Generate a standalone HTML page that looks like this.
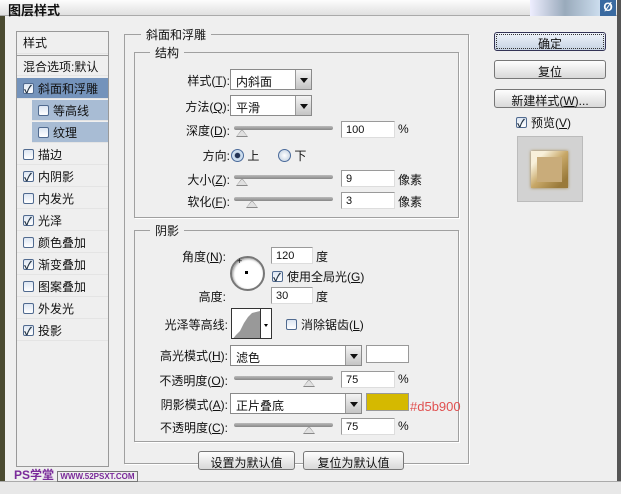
<!DOCTYPE html>
<html><head><meta charset="utf-8"><style>
*{box-sizing:border-box;margin:0;padding:0}
body{width:621px;height:494px;overflow:hidden;background:#efefef;font-family:"Liberation Sans","Noto Sans CJK SC",sans-serif;font-size:12px;color:#111;position:relative}
.a{position:absolute;white-space:nowrap}
.r{text-align:right}
.box{position:absolute;border:1px solid #a0a0a0;box-shadow:1px 1px 0 #fff}
.leg{position:absolute;background:#efefef;padding:0 5px;font-size:12px}
.inp{position:absolute;background:#fff;border:1px solid #9a9a9a;border-right-color:#ddd;border-bottom-color:#ddd;padding:2px 0 0 4px;font-size:11px}
.dd{position:absolute;background:#fff;border:1px solid #8a8a8a;padding:3px 0 0 5px}
.dd i{position:absolute;right:0;top:0;bottom:0;width:16px;background:linear-gradient(#f4f4f4,#c4c4c4);border-left:1px solid #999}
.dd i:after{content:"";position:absolute;left:4px;top:8px;border:4px solid transparent;border-top:5px solid #111}
.sl{position:absolute;height:4px;background:linear-gradient(#bbb,#888);border-radius:2px}
.th{position:absolute;width:0;height:0;border-left:6px solid transparent;border-right:6px solid transparent;border-bottom:8px solid #888}
.th:after{content:"";position:absolute;left:-5px;top:1px;border-left:5px solid transparent;border-right:5px solid transparent;border-bottom:6px solid #e0e0e0}
.cb{display:inline-block;width:11px;height:11px;border:1px solid #506a8f;background:linear-gradient(#dde6f2,#fff);vertical-align:-1px;margin-right:4px;position:relative;border-radius:2px}
.cb.on:after{content:"✓";position:absolute;left:0;top:-3px;font-size:11px;color:#234;font-weight:bold}
.li{position:absolute;left:17px;width:91px;height:21px;padding:2px 0 0 6px;border-bottom:1px solid #e4e4e4}
.btn{position:absolute;border:1px solid #777;border-radius:3px;background:linear-gradient(#fdfdfd,#d9d9d9);text-align:center;padding-top:2px}
</style></head><body>
<div class="a" style="left:0;top:0;width:621px;height:16px;background:linear-gradient(#fdfdfd,#e0e0e0);border-bottom:1px solid #aaa"></div>
<div class="a" style="left:8px;top:0;font-weight:bold;font-size:13px">图层样式</div>
<div class="a" style="left:530px;top:0;width:70px;height:16px;background:linear-gradient(90deg,#eef,#9ab 50%,#cde)"></div>
<div class="a" style="left:600px;top:0;width:16px;height:16px;background:#3a6aa0;color:#fff;font-weight:bold;text-align:center">Ø</div>
<div class="a" style="left:0;top:16px;width:5px;height:478px;background:#4a4a30"></div>
<div class="a" style="left:617px;top:0;width:4px;height:494px;background:#555"></div>
<div class="a" style="left:0;top:481px;width:621px;height:13px;background:#e8e8e8;border-top:1px solid #aaa"></div>

<!-- left list -->
<div class="a" style="left:16px;top:31px;width:93px;height:436px;border:1px solid #999;background:#efefef"></div>
<div class="li" style="top:32px;height:22px">样式</div>
<div class="li" style="top:55px;border-top:1px solid #999">混合选项:默认</div>
<div class="li" style="top:78px;background:#7493bb"><span class="cb on"></span>斜面和浮雕</div>
<div class="li" style="top:100px;left:32px;width:76px;background:#a8bcd4"><span class="cb"></span>等高线</div>
<div class="li" style="top:122px;left:32px;width:76px;background:#a8bcd4"><span class="cb"></span>纹理</div>
<div class="li" style="top:144px"><span class="cb"></span>描边</div>
<div class="li" style="top:166px"><span class="cb on"></span>内阴影</div>
<div class="li" style="top:188px"><span class="cb"></span>内发光</div>
<div class="li" style="top:210px"><span class="cb on"></span>光泽</div>
<div class="li" style="top:232px"><span class="cb"></span>颜色叠加</div>
<div class="li" style="top:254px"><span class="cb on"></span>渐变叠加</div>
<div class="li" style="top:276px"><span class="cb"></span>图案叠加</div>
<div class="li" style="top:298px"><span class="cb"></span>外发光</div>
<div class="li" style="top:320px"><span class="cb on"></span>投影</div>
<div class="a" style="left:14px;top:466px;color:#7a2a9a;font-weight:bold;font-size:12px">PS学堂 <span style="font-size:8px;border:1px solid #777;background:#eee;padding:0 2px">WWW.52PSXT.COM</span></div>

<!-- group boxes -->
<div class="box" style="left:124px;top:34px;width:345px;height:430px"></div>
<div class="leg" style="left:141px;top:26px">斜面和浮雕</div>
<div class="box" style="left:134px;top:52px;width:325px;height:166px"></div>
<div class="leg" style="left:150px;top:44px">结构</div>
<div class="box" style="left:134px;top:230px;width:325px;height:212px"></div>
<div class="leg" style="left:150px;top:222px">阴影</div>

<div class="a r" style="left:150px;width:80px;top:72px">样式(<u>T</u>):</div>
<div class="dd" style="left:230px;top:69px;width:82px;height:21px">内斜面<i></i></div>
<div class="a r" style="left:150px;width:80px;top:98px">方法(<u>Q</u>):</div>
<div class="dd" style="left:230px;top:95px;width:82px;height:21px">平滑<i></i></div>
<div class="a r" style="left:150px;width:80px;top:122px">深度(<u>D</u>):</div>
<div class="sl" style="left:234px;top:126px;width:99px"></div><div class="th" style="left:236px;top:129px"></div>
<div class="inp" style="left:341px;top:121px;width:54px;height:17px">100</div><div class="a" style="left:398px;top:122px">%</div>
<div class="a r" style="left:150px;width:80px;top:147px">方向:</div>
<div class="a" style="left:231px;top:147px"><span style="display:inline-block;width:13px;height:13px;border-radius:50%;border:1px solid #4a6a9a;background:radial-gradient(#235 30%,#cde 40%);vertical-align:-2px"></span> 上</div>
<div class="a" style="left:278px;top:147px"><span style="display:inline-block;width:13px;height:13px;border-radius:50%;border:1px solid #4a6a9a;background:radial-gradient(#fff,#bcd);vertical-align:-2px"></span> 下</div>
<div class="a r" style="left:150px;width:80px;top:171px">大小(<u>Z</u>):</div>
<div class="sl" style="left:234px;top:175px;width:99px"></div><div class="th" style="left:236px;top:178px"></div>
<div class="inp" style="left:341px;top:170px;width:54px;height:17px">9</div><div class="a" style="left:398px;top:171px">像素</div>
<div class="a r" style="left:150px;width:80px;top:193px">软化(<u>F</u>):</div>
<div class="sl" style="left:234px;top:197px;width:99px"></div><div class="th" style="left:246px;top:200px"></div>
<div class="inp" style="left:341px;top:192px;width:54px;height:17px">3</div><div class="a" style="left:398px;top:193px">像素</div>

<div class="a r" style="left:150px;width:76px;top:248px">角度(<u>N</u>):</div>
<div class="a" style="left:230px;top:256px;width:35px;height:35px;border-radius:50%;border:2px solid #777;background:#fff;box-shadow:inset 1px 1px 2px #999"></div>
<div class="a" style="left:245px;top:271px;width:3px;height:3px;background:#000"></div>
<div class="a" style="left:237px;top:256px;font-size:9px">+</div>
<div class="inp" style="left:271px;top:247px;width:42px;height:17px">120</div><div class="a" style="left:316px;top:248px">度</div>
<div class="a" style="left:272px;top:268px"><span class="cb on"></span>使用全局光(<u>G</u>)</div>
<div class="a r" style="left:150px;width:76px;top:288px">高度:</div>
<div class="inp" style="left:271px;top:287px;width:42px;height:17px">30</div><div class="a" style="left:316px;top:288px">度</div>
<div class="a r" style="left:140px;width:88px;top:316px">光泽等高线:</div>
<div class="a" style="left:231px;top:308px;width:41px;height:31px;border:1px solid #333;background:#fff;overflow:hidden">
<svg width="41" height="31" style="position:absolute;left:0;top:0"><path d="M0 31 L4 26 L8 22 L12 14 L16 8 L20 4 L28 2 L28 31 Z" fill="#999"/><rect x="28" y="0" width="1" height="31" fill="#333"/><path d="M32 15 l4 0 l-2 3z" fill="#000"/></svg></div>
<div class="a" style="left:286px;top:316px"><span class="cb"></span>消除锯齿(<u>L</u>)</div>
<div class="a r" style="left:140px;width:88px;top:347px">高光模式(<u>H</u>):</div>
<div class="dd" style="left:230px;top:345px;width:132px;height:21px">滤色<i></i></div>
<div class="a" style="left:366px;top:345px;width:43px;height:18px;border:1px solid #999;background:#fff"></div>
<div class="a r" style="left:140px;width:88px;top:372px">不透明度(<u>O</u>):</div>
<div class="sl" style="left:234px;top:376px;width:99px"></div><div class="th" style="left:303px;top:379px"></div>
<div class="inp" style="left:341px;top:371px;width:54px;height:17px">75</div><div class="a" style="left:398px;top:372px">%</div>
<div class="a r" style="left:140px;width:88px;top:396px">阴影模式(<u>A</u>):</div>
<div class="dd" style="left:230px;top:393px;width:132px;height:21px">正片叠底<i></i></div>
<div class="a" style="left:366px;top:393px;width:43px;height:18px;border:1px solid #999;background:#d5b900"></div>
<div class="a" style="left:410px;top:399px;color:#e05050;font-size:13px">#d5b900</div>
<div class="a r" style="left:140px;width:88px;top:419px">不透明度(<u>C</u>):</div>
<div class="sl" style="left:234px;top:423px;width:99px"></div><div class="th" style="left:303px;top:426px"></div>
<div class="inp" style="left:341px;top:418px;width:54px;height:17px">75</div><div class="a" style="left:398px;top:419px">%</div>

<div class="btn" style="left:198px;top:451px;width:97px;height:19px">设置为默认值</div>
<div class="btn" style="left:303px;top:451px;width:101px;height:19px">复位为默认值</div>

<div class="btn" style="left:494px;top:32px;width:112px;height:19px;border-color:#335;outline:1px dotted #333;outline-offset:-3px;background:linear-gradient(#eef3fa,#c7d3e3)">确定</div>
<div class="btn" style="left:494px;top:60px;width:112px;height:19px">复位</div>
<div class="btn" style="left:494px;top:89px;width:112px;height:19px">新建样式(<u>W</u>)...</div>
<div class="a" style="left:516px;top:114px"><span class="cb on"></span>预览(<u>V</u>)</div>
<div class="a" style="left:517px;top:136px;width:66px;height:66px;border:1px solid #bbb;background:#d2d2d2"></div>
<div class="a" style="left:531px;top:151px;width:37px;height:37px;background:linear-gradient(135deg,#f8f0da 20%,#c8a868 50%,#9a7a3a 85%);box-shadow:0 0 3px #a08040"></div>
<div class="a" style="left:537px;top:157px;width:25px;height:25px;background:#c9ac7a"></div>
</body></html>
